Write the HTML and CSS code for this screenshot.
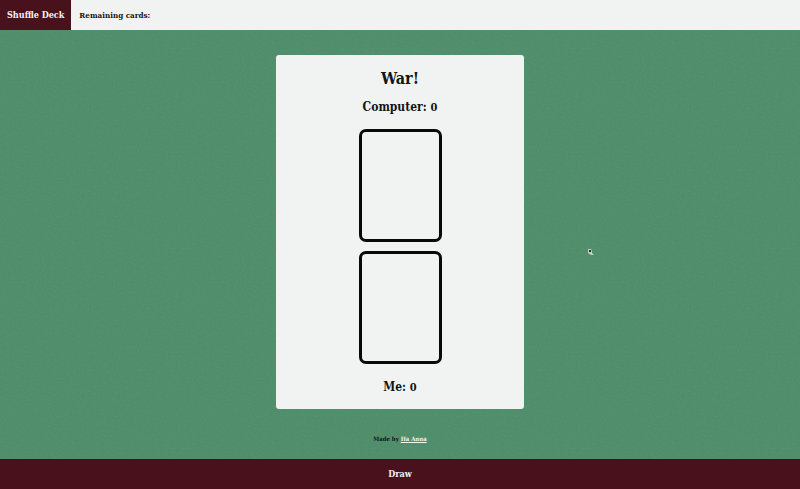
FILE: index.html
```html
<!DOCTYPE html>
<html lang="en">
<head>
<meta charset="utf-8">
<meta name="viewport" content="width=device-width, initial-scale=1">
<title>War!</title>
<link rel="stylesheet" href="styles.css">
</head>
<body>
<header class="topbar">
  <button class="shuffle" type="button">Shuffle Deck</button>
  <p class="remaining">Remaining cards:</p>
</header>
<main class="table">
  <section class="board">
    <h1 class="title">War!</h1>
    <h2 class="score">Computer: <span class="points">0</span></h2>
    <div class="slots">
      <div class="slot"></div>
      <div class="slot"></div>
    </div>
    <h2 class="score">Me: <span class="points">0</span></h2>
  </section>
  <footer class="credit">Made by <a href="#">Ha Anna</a></footer>
</main>
<button class="draw" type="button">Draw</button>
<svg class="pointer" viewBox="0 0 6 7" aria-hidden="true">
  <path d="M0 0H3L4 2V4L6 6H3L0 4Z" fill="#c5cbc8"/>
  <path d="M1 1H3V3H1Z" fill="#26322d"/>
</svg>
</body>
</html>
```
FILE: styles.css
```css
* {
  box-sizing: border-box;
}

body {
  margin: 0;
  min-height: 100vh;
  display: flex;
  flex-direction: column;
  font-family: "DejaVu Serif Condensed", "DejaVu Serif", serif;
  color: #111514;
  background-color: #4c8d68;
  background-image: url("data:image/svg+xml,%3Csvg xmlns='http://www.w3.org/2000/svg' width='200' height='200'%3E%3Cfilter id='n'%3E%3CfeTurbulence type='fractalNoise' baseFrequency='.5' numOctaves='2' stitchTiles='stitch'/%3E%3CfeColorMatrix type='saturate' values='0'/%3E%3C/filter%3E%3Crect width='200' height='200' filter='url(%23n)' opacity='.08'/%3E%3C/svg%3E");
}

button {
  border: 0;
  font-family: inherit;
  font-size: 9px;
  font-weight: bold;
  color: #f1f3f3;
  background: #48111c;
  cursor: pointer;
}

h1,
h2,
p {
  margin: 0;
}

.topbar {
  display: flex;
  align-items: stretch;
  height: 30px;
  background: #f1f3f3;
}

.shuffle {
  padding: 0 7px;
}

.remaining {
  padding: 0 8px;
  font-size: 8px;
  font-weight: bold;
  line-height: 30px;
}

.table {
  flex: 1;
  display: flex;
  flex-direction: column;
  align-items: center;
  padding-top: 25px;
}

.board {
  width: 31%;
  min-width: 180px;
  padding: 12px;
  display: flex;
  flex-direction: column;
  align-items: center;
  border-radius: 3px;
  background: #f1f3f3;
}

.title {
  margin-bottom: 6px;
  font-size: 16px;
  line-height: 24px;
}

.score {
  height: 20px;
  font-size: 12px;
  line-height: 20px;
}

.points {
  font-size: 11px;
}

.slots {
  display: grid;
  gap: 9px;
  margin: 12px 0 13px;
}

.slot {
  width: 83px;
  height: 113px;
  border: 3px solid #080a0a;
  border-radius: 7px;
}

.credit {
  margin: 24px 0 14px;
  font-size: 6px;
  font-weight: bold;
  line-height: 12px;
}

.credit a {
  color: #f1f3f3;
}

.draw {
  height: 30px;
}

.pointer {
  position: absolute;
  left: 73.5%;
  top: 249px;
  width: 6px;
  height: 7px;
}
```
